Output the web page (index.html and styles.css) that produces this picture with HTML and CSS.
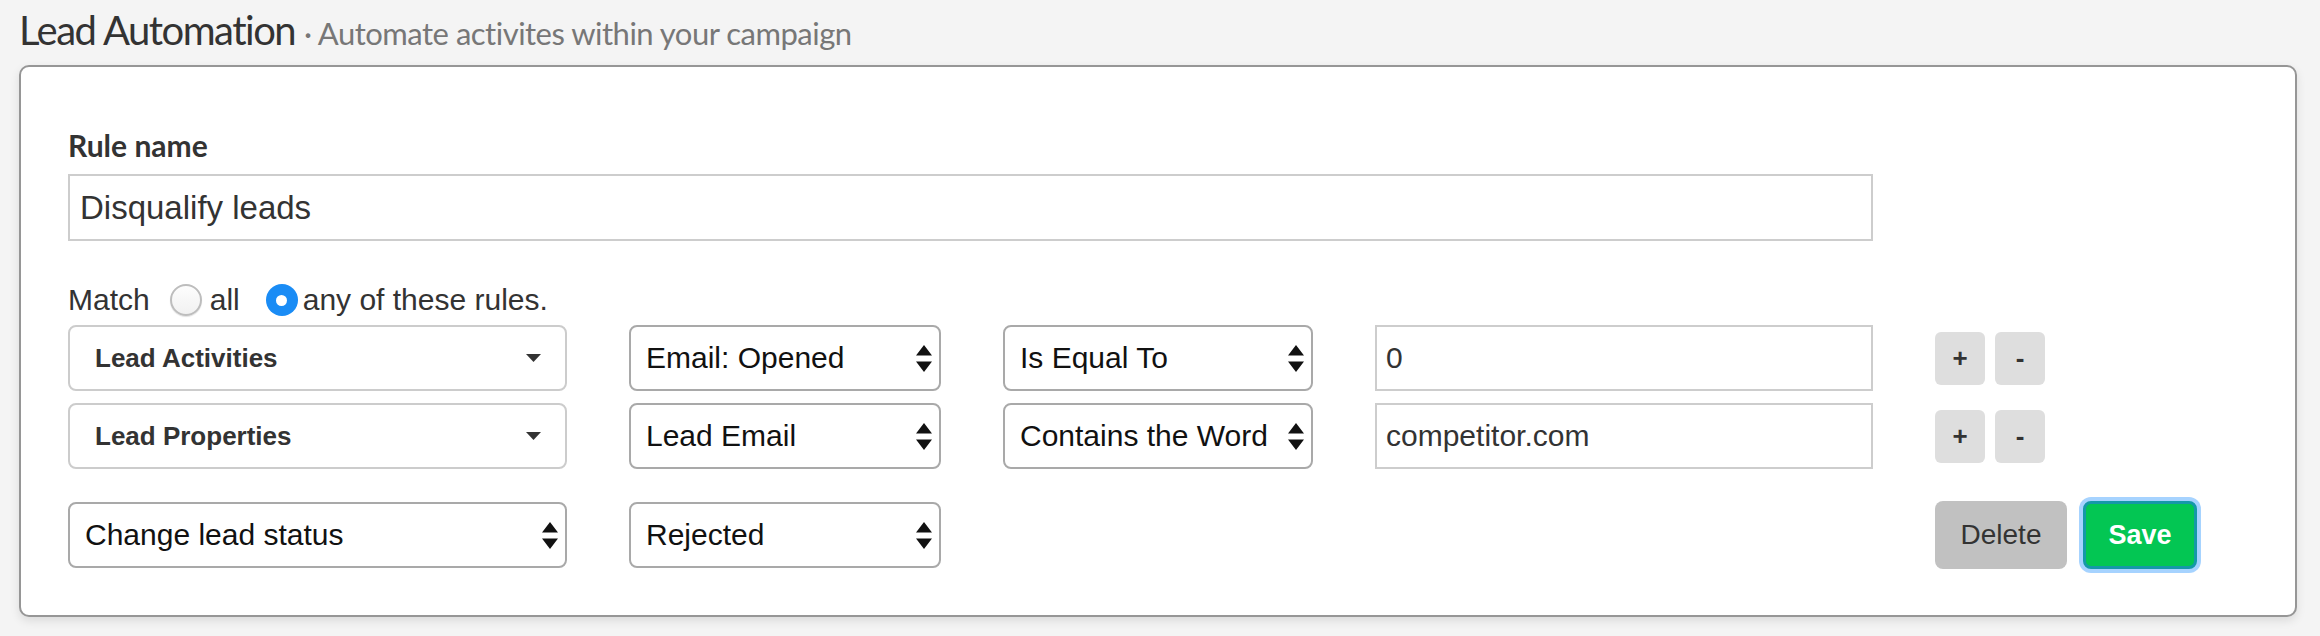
FILE: index.html
```html
<!DOCTYPE html>
<html>
<head>
<meta charset="utf-8">
<title>Lead Automation</title>
<link rel="stylesheet" href="styles.css">
</head>
<body>
<h1 class="page-title">Lead Automation <span class="subtitle">· Automate activites within your campaign</span></h1>
<div class="card">
  <label class="field-label">Rule name</label>
  <input class="rule-input" type="text" value="Disqualify leads">

  <div class="match-row">
    <span>Match</span>
    <span class="radio"></span>
    <span class="radio-text">all</span>
    <span class="radio checked"></span>
    <span class="radio-text">any of these rules.</span>
  </div>

  <div class="rule-row">
    <div class="dd">
      <span>Lead Activities</span>
      <svg class="caret" width="15" height="8" viewBox="0 0 15 8"><path d="M0 0H15L7.5 8Z" fill="#333"/></svg>
    </div>
    <div class="sel"><span>Email: Opened</span><svg class="updown" width="16" height="27" viewBox="0 0 16 27"><path d="M8 0L16 10.5H0Z M0 16.5H16L8 27Z" fill="#111"/></svg></div>
    <div class="sel"><span>Is Equal To</span><svg class="updown" width="16" height="27" viewBox="0 0 16 27"><path d="M8 0L16 10.5H0Z M0 16.5H16L8 27Z" fill="#111"/></svg></div>
    <input class="val-input" type="text" value="0">
    <div class="pm">
      <button class="pm-btn">+</button>
      <button class="pm-btn">-</button>
    </div>
  </div>

  <div class="rule-row second">
    <div class="dd">
      <span>Lead Properties</span>
      <svg class="caret" width="15" height="8" viewBox="0 0 15 8"><path d="M0 0H15L7.5 8Z" fill="#333"/></svg>
    </div>
    <div class="sel"><span>Lead Email</span><svg class="updown" width="16" height="27" viewBox="0 0 16 27"><path d="M8 0L16 10.5H0Z M0 16.5H16L8 27Z" fill="#111"/></svg></div>
    <div class="sel"><span>Contains the Word</span><svg class="updown" width="16" height="27" viewBox="0 0 16 27"><path d="M8 0L16 10.5H0Z M0 16.5H16L8 27Z" fill="#111"/></svg></div>
    <input class="val-input" type="text" value="competitor.com">
    <div class="pm">
      <button class="pm-btn">+</button>
      <button class="pm-btn">-</button>
    </div>
  </div>

  <div class="rule-row action">
    <div class="sel"><span>Change lead status</span><svg class="updown" width="16" height="27" viewBox="0 0 16 27"><path d="M8 0L16 10.5H0Z M0 16.5H16L8 27Z" fill="#111"/></svg></div>
    <div class="sel"><span>Rejected</span><svg class="updown" width="16" height="27" viewBox="0 0 16 27"><path d="M8 0L16 10.5H0Z M0 16.5H16L8 27Z" fill="#111"/></svg></div>
    <div></div>
    <div></div>
    <div class="actions">
      <button class="btn-delete">Delete</button>
      <button class="btn-save">Save</button>
    </div>
  </div>
</div>
</body>
</html>
```

FILE: styles.css
```css
html, body {
  margin: 0;
  padding: 0;
}
body {
  background: #f4f4f4;
  padding: 6px 23px 0 19px;
  box-sizing: border-box;
  width: 2320px;
  height: 636px;
  overflow: hidden;
}
.page-title {
  margin: 0 0 11px 0;
  font-family: Lato, "Open Sans", sans-serif;
  font-weight: 400;
  font-size: 40px;
  line-height: 48px;
  letter-spacing: -1.5px;
  color: #333;
  white-space: nowrap;
}
.subtitle {
  font-size: 31px;
  line-height: 1;
  letter-spacing: -0.5px;
  color: #777;
}
.card {
  box-sizing: border-box;
  width: 2278px;
  height: 552px;
  background: #fff;
  border: 2px solid #969696;
  border-radius: 10px;
  box-shadow: 0 4px 10px rgba(0, 0, 0, 0.10);
  padding: 60px 0 0 47px;
  font-family: "Liberation Sans", Arial, sans-serif;
  color: #333;
}
.field-label {
  display: block;
  font-family: Lato, "Open Sans", sans-serif;
  font-weight: 700;
  font-size: 30px;
  line-height: 36px;
  color: #333;
  margin-bottom: 11px;
}
.rule-input {
  display: block;
  box-sizing: border-box;
  width: 1805px;
  height: 67px;
  margin: 0;
  border: 2px solid #cdcdcd;
  border-radius: 0;
  padding: 0 10px;
  font-family: "Liberation Sans", Arial, sans-serif;
  font-size: 33px;
  color: #333;
  outline: none;
}
.match-row {
  display: flex;
  align-items: center;
  height: 34px;
  margin-top: 42px;
  margin-bottom: 8px;
  font-size: 30px;
  color: #333;
}
.radio {
  box-sizing: border-box;
  width: 32px;
  height: 32px;
  border-radius: 50%;
  border: 2px solid #bdbdbd;
  background: linear-gradient(#fdfdfd, #f1f1f1);
  box-shadow: 0 1px 1px rgba(0, 0, 0, 0.12);
  margin-left: 20px;
  display: flex;
  align-items: center;
  justify-content: center;
}
.radio.checked {
  border: none;
  background: #1a8cf5;
  margin-left: 26px;
  box-shadow: none;
}
.radio.checked::after {
  content: "";
  width: 11px;
  height: 11px;
  border-radius: 50%;
  background: #fff;
}
.radio-text {
  margin-left: 8px;
}
.radio.checked + .radio-text {
  margin-left: 5px;
}
.rule-row {
  display: grid;
  grid-template-columns: 499px 312px 310px 498px auto;
  column-gap: 62px;
  height: 66px;
  align-items: center;
}
.rule-row.second {
  margin-top: 12px;
}
.rule-row.action {
  margin-top: 32px;
}
.dd,
.sel {
  box-sizing: border-box;
  height: 66px;
  display: flex;
  align-items: center;
  background: #fff;
  border-radius: 8px;
  white-space: nowrap;
}
.dd {
  border: 2px solid #cccccc;
  padding: 0 24px 0 25px;
  font-weight: 700;
  font-size: 26px;
  color: #333;
}
.sel {
  border: 2px solid #a9a9a9;
  padding: 0 7px 0 15px;
  font-size: 30px;
  color: #111;
}
.caret,
.updown {
  margin-left: auto;
  flex: none;
}
.val-input {
  box-sizing: border-box;
  width: 498px;
  height: 66px;
  margin: 0;
  border: 2px solid #cdcdcd;
  border-radius: 0;
  padding: 0 9px;
  font-family: "Liberation Sans", Arial, sans-serif;
  font-size: 30px;
  color: #333;
  outline: none;
}
.pm {
  display: flex;
  gap: 10px;
}
.pm-btn {
  width: 50px;
  height: 53px;
  border: none;
  border-radius: 6px;
  background: #dedede;
  padding: 0;
  font-family: "Liberation Sans", Arial, sans-serif;
  font-weight: 700;
  font-size: 26px;
  color: #333;
}
.actions {
  display: flex;
  align-items: center;
  gap: 16px;
}
.btn-delete {
  width: 132px;
  height: 68px;
  border: none;
  border-radius: 8px;
  background: #c1c1c1;
  padding: 0;
  font-family: "Liberation Sans", Arial, sans-serif;
  font-size: 28px;
  color: #333;
}
.btn-save {
  box-sizing: border-box;
  width: 114px;
  height: 68px;
  border: 3px solid #1598a8;
  border-radius: 8px;
  background: #03c653;
  box-shadow: 0 0 0 4px #a6d3ff;
  padding: 0;
  font-family: "Liberation Sans", Arial, sans-serif;
  font-weight: 700;
  font-size: 27px;
  color: #fff;
}
```
